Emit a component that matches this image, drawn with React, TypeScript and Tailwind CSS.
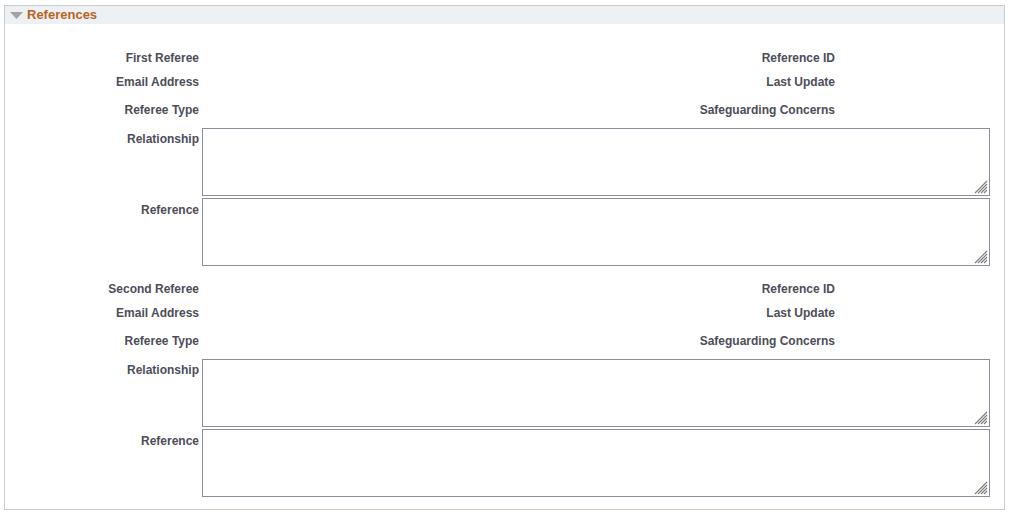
import React from "react";

type Referee = { title: string };

const referees: Referee[] = [{ title: "First Referee" }, { title: "Second Referee" }];

function InfoRow({ left, right, className }: { left: string; right: string; className?: string }) {
  return (
    <div className={`flex items-center h-6 ${className ?? ""}`}>
      <p className="w-[194px] text-right">{left}</p>
      <div className="w-[401px]" />
      <p className="w-[235px] text-right">{right}</p>
    </div>
  );
}

function Grip() {
  return (
    <svg width="14" height="14" viewBox="0 0 14 14" className="absolute right-[2px] bottom-[2px] pointer-events-none">
      <g stroke="#7a7a7a" strokeWidth="1.1">
        <line x1="1" y1="13" x2="13" y2="1" />
        <line x1="4" y1="13" x2="13" y2="4" />
        <line x1="7" y1="13" x2="13" y2="7" />
        <line x1="10" y1="13" x2="13" y2="10" />
      </g>
    </svg>
  );
}

function TextRow({ label, className, pad }: { label: string; className?: string; pad: string }) {
  return (
    <div className={`flex items-start ${className ?? ""}`}>
      <p className={`w-[194px] text-right ${pad}`}>{label}</p>
      <div className="relative ml-[3px]">
        <textarea
          className="block w-[788px] h-[68px] border border-[#8e8c9c] bg-white outline-none resize-none"
          aria-label={label}
        />
        <Grip />
      </div>
    </div>
  );
}

function RefereeBlock({ referee }: { referee: Referee }) {
  return (
    <div>
      <InfoRow left={referee.title} right="Reference ID" />
      <InfoRow left="Email Address" right="Last Update" />
      <InfoRow left="Referee Type" right="Safeguarding Concerns" className="mt-1" />
      <TextRow label="Relationship" className="mt-[6px]" pad="pt-[2px]" />
      <TextRow label="Reference" className="mt-[2px]" pad="pt-[3px]" />
    </div>
  );
}

export default function App() {
  return (
    <div className="pl-1 pt-[5px] bg-white font-['Liberation_Sans',Arial,sans-serif]">
      <div className="w-[1001px] h-[505px] border border-[#cbcbcb] bg-white">
        <div className="flex items-center h-[18px] bg-[#eef1f3]">
          <svg width="13" height="8" viewBox="0 0 13 8" className="ml-[5px] mt-[1px]">
            <polygon points="0,0 13,0 6.5,7" fill="#a3a3a3" />
          </svg>
          <p className="ml-[4px] text-[13px] font-bold text-[#b8621f]">References</p>
        </div>
        <div className="pt-[22px] text-[12px] font-bold text-[#4d4d58] space-y-[11px]">
          {referees.map((r) => (
            <RefereeBlock key={r.title} referee={r} />
          ))}
        </div>
      </div>
    </div>
  );
}
